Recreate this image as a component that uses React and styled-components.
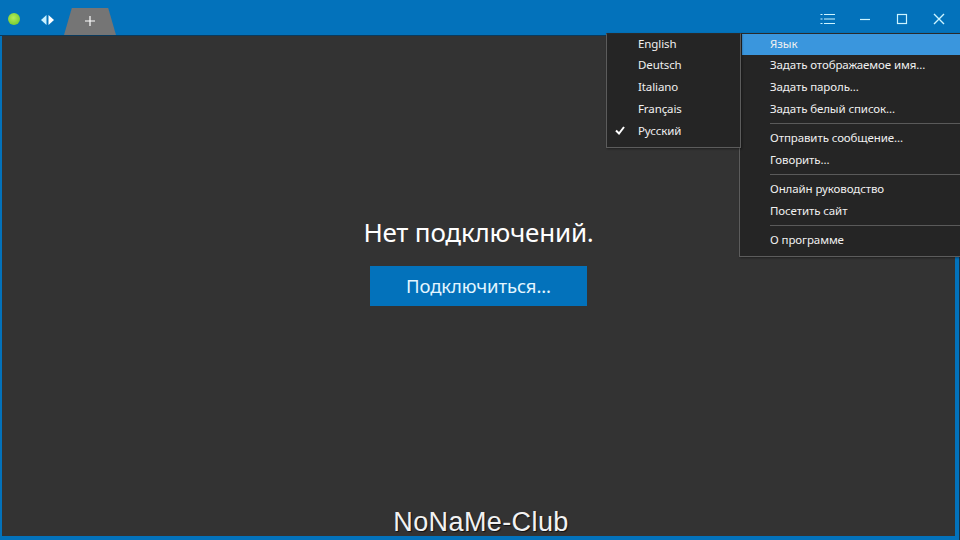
import React from "react";
import styled, { createGlobalStyle } from "styled-components";

const GlobalStyle = createGlobalStyle`
  html, body {
    margin: 0;
    padding: 0;
    width: 960px;
    height: 540px;
    overflow: hidden;
    background: #333333;
  }
  * { box-sizing: border-box; }
`;

const Window = styled.div`
  position: relative;
  display: flex;
  flex-direction: column;
  width: 960px;
  height: 540px;
  background: #0372bb;
  padding: 0 5px 4px 2px;
  box-shadow: inset -1px 0 0 #14344c;
  font-family: "Noto Sans", "Open Sans", sans-serif;
  overflow: hidden;
`;

const TitleBar = styled.div`
  display: flex;
  align-items: center;
  height: 36px;
  margin: 0 -5px 0 -2px;
  padding-left: 8px;
  background: #0372bb;
  border-bottom: 1px solid #0b3a5c;
`;

const StatusDot = styled.span`
  width: 12px;
  height: 12px;
  border-radius: 50%;
  margin-top: 3px;
  background: radial-gradient(circle at 45% 40%, #b5ec5a, #7ccf35 70%, #4f9e2a);
`;

const NavIcon = styled.svg`
  width: 13px;
  height: 10px;
  margin: 5px 0 0 21px;
`;

const NewTab = styled.div`
  display: flex;
  align-items: center;
  justify-content: center;
  width: 52px;
  height: 27px;
  margin: 8px 0 0 10px;
  padding-bottom: 1px;
  background: #757575;
  clip-path: polygon(15% 0, 85% 0, 100% 100%, 0 100%);
`;

const TitleControls = styled.div`
  display: flex;
  align-items: center;
  margin-left: auto;
  padding-right: 13px;
  margin-top: 3px;
`;

const ControlIcon = styled.svg`
  display: block;
  width: 16px;
  height: 16px;
  margin-left: ${(p) => p.$gap}px;
  fill: none;
  stroke: #cdf4ff;
  stroke-width: 1.2;
`;

const Content = styled.main`
  flex: 1;
  display: flex;
  flex-direction: column;
  align-items: center;
  background: #333333;
  padding-top: 179px;
`;

const Heading = styled.h1`
  margin: 0;
  font-size: 26px;
  line-height: 34px;
  font-weight: 400;
  color: #ffffff;
  letter-spacing: -0.2px;
`;

const ConnectButton = styled.button`
  width: 217px;
  height: 40px;
  margin: 17px 0 0;
  padding: 0 0 2px;
  border: 0;
  background: #0372bb;
  color: #e3f6ff;
  font-family: inherit;
  font-size: 18.5px;
  letter-spacing: -0.1px;
`;

const Watermark = styled.div`
  margin: auto 0 0 5px;
  height: 31px;
  font-family: "Liberation Sans", Arial, sans-serif;
  font-size: 27px;
  line-height: 34px;
  letter-spacing: 0.4px;
  color: #f2f2f2;
  text-shadow: 1px 1px 1px #111111;
`;

const Menu = styled.div`
  position: absolute;
  top: 33px;
  left: ${(p) => p.$left}px;
  width: ${(p) => p.$width}px;
  height: ${(p) => p.$height}px;
  background: #252525;
  border: 1px solid #5c5c5c;
  border-top-color: #2a2a2a;
  box-shadow: 1px 1px 2px rgba(0, 0, 0, 0.4);
  z-index: ${(p) => p.$z};
`;

const Item = styled.div`
  position: relative;
  height: 22px;
  margin-left: ${(p) => (p.$active ? "2px" : "0")};
  padding-left: ${(p) => (p.$active ? "28px" : `${p.$indent}px`)};
  font-size: 11.5px;
  line-height: 20px;
  letter-spacing: -0.1px;
  color: #f0f0f0;
  background: ${(p) => (p.$active ? "#3a96dd" : "transparent")};
  white-space: nowrap;

  &:first-child {
    height: 21px;
  }
`;

const Check = styled.svg`
  position: absolute;
  left: 8px;
  top: 5px;
  width: 10px;
  height: 9px;
  fill: none;
  stroke: #ffffff;
  stroke-width: 2;
`;

const Separator = styled.div`
  height: 1px;
  margin: 2px 0 4px 30px;
  background: #5a5a5a;
`;

const languages = ["English", "Deutsch", "Italiano", "Français", "Русский"];

const menuGroups = [
  ["Язык", "Задать отображаемое имя...", "Задать пароль...", "Задать белый список..."],
  ["Отправить сообщение...", "Говорить..."],
  ["Онлайн руководство", "Посетить сайт"],
  ["О программе"],
];

const App = () => {
  return (
    <Window>
      <GlobalStyle />
      <TitleBar>
        <StatusDot />
        <NavIcon viewBox="0 0 13 10">
          <path d="M5.5 0v10L0 5z" fill="#c9f0ff" />
          <path d="M7.5 0v10l5.5-5z" fill="#ffffff" />
        </NavIcon>
        <NewTab>
          <svg width="10" height="10" viewBox="0 0 10 10">
            <path d="M5 0v10M0 5h10" stroke="#ffffff" strokeWidth="1.2" />
          </svg>
        </NewTab>
        <TitleControls>
          <ControlIcon viewBox="0 0 16 16" $gap={0}>
            <path d="M4 3.5h11M4 8h11M4 12.5h11M0.5 3.5h2M0.5 8h2M0.5 12.5h2" />
          </ControlIcon>
          <ControlIcon viewBox="0 0 16 16" $gap={21}>
            <path d="M3 8.5h10" />
          </ControlIcon>
          <ControlIcon viewBox="0 0 16 16" $gap={21}>
            <rect x="3.5" y="3.5" width="9" height="9" />
          </ControlIcon>
          <ControlIcon viewBox="0 0 16 16" $gap={21}>
            <path d="M3 3l10 10M13 3L3 13" strokeWidth="1.4" />
          </ControlIcon>
        </TitleControls>
      </TitleBar>

      <Content>
        <Heading>Нет подключений.</Heading>
        <ConnectButton>Подключиться...</ConnectButton>
        <Watermark>NoNaMe-Club</Watermark>
      </Content>

      <Menu $left={739} $width={223} $height={224} $z={1}>
        {menuGroups.map((group, i) => (
          <React.Fragment key={group[0]}>
            {i > 0 && <Separator />}
            {group.map((label) => (
              <Item key={label} $indent={30} $active={label === "Язык"}>
                {label}
              </Item>
            ))}
          </React.Fragment>
        ))}
      </Menu>

      <Menu $left={606} $width={135} $height={115} $z={2}>
        {languages.map((label) => (
          <Item key={label} $indent={31}>
            {label === "Русский" && (
              <Check viewBox="0 0 10 9">
                <path d="M1 4.5l3 3 5-6.5" />
              </Check>
            )}
            {label}
          </Item>
        ))}
      </Menu>
    </Window>
  );
};

export default App;
